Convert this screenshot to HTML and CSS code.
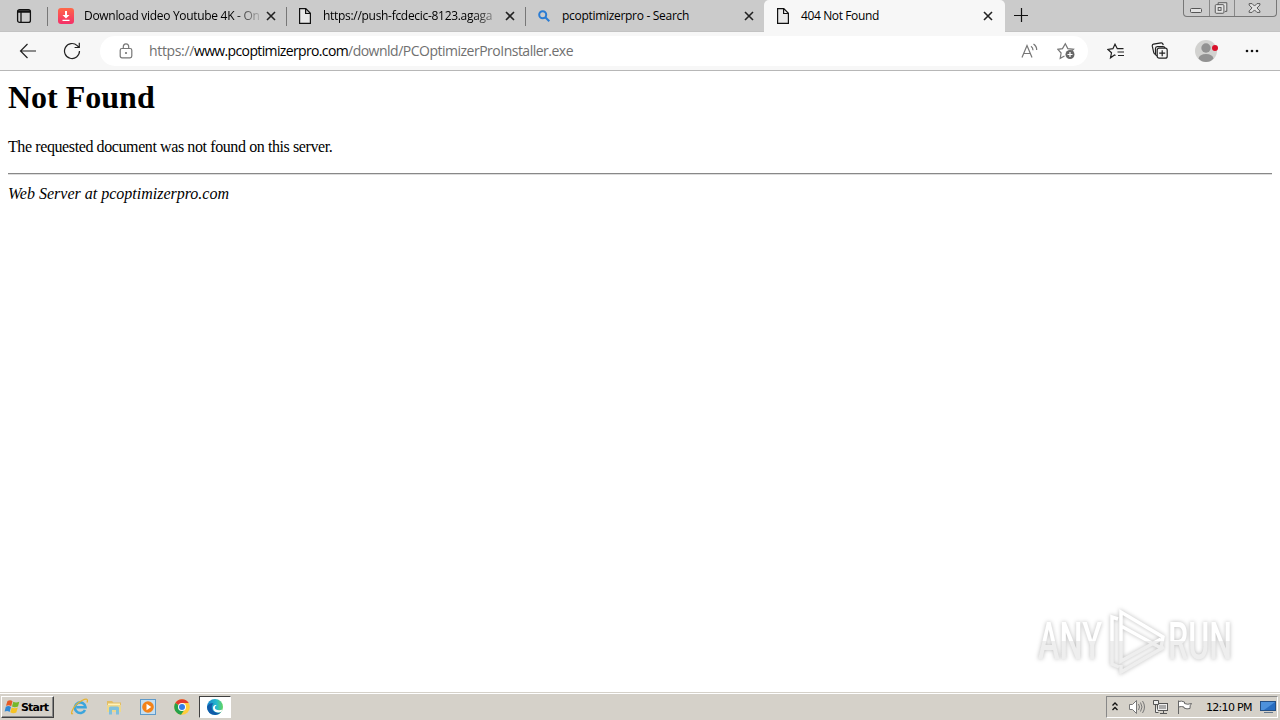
FILE: index.html
```html
<!DOCTYPE html>
<html lang="en">
<head>
    <meta charset="UTF-8">
    <title>404 Not Found</title>
    <link rel="stylesheet" href="styles.css">
</head>
<body>
    <div class="tabs">
        <div class="tab-actions">
            <svg width="16" height="16" viewBox="0 0 16 16" fill="none" stroke="#111" stroke-width="1.3"><rect x="1.6" y="1.6" width="12.8" height="12.8" rx="2"/><path d="M1.6 4h12.8M1.6 2.8h12.8M5 4v10" /></svg>
        </div>
        <div class="tab">
            <svg class="favicon" width="16" height="16" viewBox="0 0 16 16"><defs><linearGradient id="dl" x2="0" y2="1"><stop stop-color="#ff6848"/><stop offset="1" stop-color="#f42f69"/></linearGradient></defs><rect width="16" height="16" rx="3" fill="url(#dl)"/><path d="M7 3h2v4h2.500L8 10.500 4.500 7H7zM4.500 11.700h7V13h-7z" fill="#fff"/></svg>
            <span class="title fade">Download video Youtube 4K - On</span>
            <svg class="close" width="10" height="10" viewBox="0 0 10 10"><path d="M1 1l8 8M9 1L1 9"/></svg>
        </div>
        <div class="tab">
            <svg class="favicon" width="16" height="16" viewBox="0 0 16 16"><path class="page-icon" d="M2.600.700h6.200l4.600 4.600v10H2.600zM8.600.700v4.800h4.800"/></svg>
            <span class="title fade">https://push-fcdecic-8123.agaga</span>
            <svg class="close" width="10" height="10" viewBox="0 0 10 10"><path d="M1 1l8 8M9 1L1 9"/></svg>
        </div>
        <div class="tab no-line">
            <svg class="favicon" width="16" height="16" viewBox="0 0 16 16" fill="none" stroke="#2b7cd3" stroke-width="2"><circle cx="6.700" cy="6.700" r="3.500"/><path d="M9.300 9.300l4 4"/></svg>
            <span class="title">pcoptimizerpro - Search</span>
            <svg class="close" width="10" height="10" viewBox="0 0 10 10"><path d="M1 1l8 8M9 1L1 9"/></svg>
        </div>
        <div class="tab active">
            <svg class="favicon" width="16" height="16" viewBox="0 0 16 16"><path class="page-icon" d="M2.600.700h6.200l4.600 4.600v10H2.600zM8.600.700v4.800h4.800"/></svg>
            <span class="title">404 Not Found</span>
            <svg class="close" width="10" height="10" viewBox="0 0 10 10"><path d="M1 1l8 8M9 1L1 9"/></svg>
        </div>
        <svg class="new-tab" width="14" height="14" viewBox="0 0 14 14"><path d="M7.500 0v14M0 7.500h14" stroke="#111" stroke-width="1.200"/></svg>
        <div class="window-buttons">
            <svg width="25" height="16" viewBox="0 0 25 16"><rect x="6.500" y="8.500" width="11" height="4" rx="1"/></svg>
            <svg width="25" height="16" viewBox="0 0 25 16"><path d="M8.500 4.500v-2h9v9h-2"/><rect x="5.500" y="4.500" width="9" height="9" rx="1"/><rect x="8.500" y="7.500" width="3" height="3"/></svg>
            <svg width="42" height="16" viewBox="0 0 42 16"><path d="M14.500 3.500h3l2.500 2.500 2.500-2.500h3v1.500L22.500 8l3 3v1.500h-3L20 10l-2.500 2.500h-3V11l3-3-3-3z"/></svg>
        </div>
    </div>

    <div class="toolbar">
        <svg class="back" width="18" height="16" viewBox="0 0 18 16"><path d="M17 8H1.500M8.500 1l-7 7 7 7"/></svg>
        <svg class="reload" width="18" height="18" viewBox="0 0 18 18"><path d="M16.500 9a7.500 7.500 0 1 1-2.300-5.400l1.800 1.700M16.300.800v4.700h-4.700"/></svg>
        <div class="address">
            <svg class="lock" width="14" height="16" viewBox="0 0 14 16"><rect x="1.200" y="5.500" width="11.600" height="9.300" rx="1.700"/><path d="M4.300 5.500V3.800a2.700 2.900 0 0 1 5.400 0v1.700"/><circle cx="7" cy="10" r=".5"/></svg>
            <div class="url"><span class="scheme">https://</span><span class="host">www.pcoptimizerpro.com</span><span class="path">/downld/PCOptimizerProInstaller.exe</span></div>
            <svg class="read" width="17" height="16" viewBox="0 0 17 16"><path d="M1 14.500L6 2.500l5 12M2.700 10.500h6.600M10 3.300q2 1.400 2 4M12.500 1q3.300 2.300 3.200 6"/></svg>
            <svg class="fav-add" width="19" height="18" viewBox="0 0 19 18"><path d="M7.500 14l-4.300 2.300.9-5.300L.900 7.300l4.600-.7L8.300 1.800l2.500 4.800 5.700.7-1.800 1.700"/><circle cx="13" cy="12.500" r="4.500" fill="#666" stroke="none"/><path d="M13 10v5M10.500 12.500h5" stroke="#fff"/></svg>
        </div>
        <svg class="favorites" width="18" height="17" viewBox="0 0 18 17"><path d="M8.500 12.600L7.500 12 3.500 14.800l1-5L1 6.500l4.900-.8L8 1.200l2.300 4.500h6.200M10.500 9h6.500M11 12.500h6"/></svg>
        <svg class="collections" width="18" height="18" viewBox="0 0 18 18"><path d="M4.500 12.500Q3 12 2.700 10.500L1.300 4.200q-.3-1.600 1.200-2l7.500-1.400q1.500-.2 1.900 1.200l.3 1.200M6.200 14Q4.500 13.500 4.500 12V6.500q0-1.900 1.800-1.900h5.700q1.700 0 2 1.600"/><rect x="6.200" y="6.200" width="10" height="10" rx="2" fill="#f7f7f7"/><path d="M11.200 8.300v6M8.200 11.200h6"/></svg>
        <svg class="profile" width="24" height="24" viewBox="0 0 24 24"><circle cx="11" cy="12" r="11" fill="#d2d2d0"/><circle cx="11" cy="9" r="4.700" fill="#929292"/><path d="M3.500 19.500q1-4.500 7.500-4.500t7.500 4.500Q15.500 23 11 23t-7.500-3.500z" fill="#929292"/><circle cx="20" cy="9" r="3" fill="#d9112b"/></svg>
        <svg class="more" width="14" height="4" viewBox="0 0 14 4" fill="#111"><circle cx="2" cy="2" r="1.300"/><circle cx="7" cy="2" r="1.300"/><circle cx="12" cy="2" r="1.300"/></svg>
    </div>

    <div class="page">
        <h1>Not Found</h1>
        <p>The requested document was not found on this server.</p>
        <hr>
        <address>Web Server at pcoptimizerpro.com</address>
        <svg class="watermark" width="210" height="74" viewBox="0 0 210 74">
            <defs>
                <linearGradient id="wm" x1="0" y1="0" x2="0" y2="74" gradientUnits="userSpaceOnUse"><stop offset=".5" stop-color="#fff"/><stop offset=".5" stop-color="#eee"/></linearGradient>
            </defs>
            <g class="mark">
                <text x="8" y="55" textLength="64" lengthAdjust="spacingAndGlyphs">ANY</text>
                <text x="138" y="55" textLength="64" lengthAdjust="spacingAndGlyphs">RUN</text>
                <path d="M88 15l-6-2v47l7 3M91 61v7l43-25"/>
                <path d="M91 8v14l40 22 2-11zM91 20v37l40-22"/>
            </g>
        </svg>
    </div>

    <div class="taskbar">
        <div class="start">
            <svg width="17" height="16" viewBox="0 0 17 16"><path d="M3.500 2q3-1.800 5 .2L7.200 7.300q-2-1.800-5.200-.5z" fill="#e65b25"/><path d="M9.300 2.700q2.500 1.500 6 0L14 7.500q-3.500 1.500-6-.1z" fill="#76b82a"/><path d="M1.800 7.700q3-1.500 5.200.3l-1.400 5q-2-1.700-5-.4z" fill="#3088d5"/><path d="M7.700 8.500q2.800 1.500 6.100 0l-1.500 5q-3 1.500-6-.2z" fill="#f6c324"/></svg>
            <span>Start</span>
        </div>
        <div class="quick">
            <svg width="18" height="18" viewBox="0 0 18 18" fill="none"><path d="M14 12A5.300 5.300 0 1 1 14.500 9.200H5.500" stroke="#3ca5dc" stroke-width="2.600"/><path d="M2 15.500Q-.500 17 1.300 12.500 4 6 11 2.500q7-3.500 5 2" stroke="#e6b331" stroke-width="1.300"/></svg>
        </div>
        <div class="quick">
            <svg width="18" height="18" viewBox="0 0 18 18"><path d="M2 3h5l1.500 1.500H16V14H2z" fill="#e2bd65"/><path d="M3 5.500h12V13H3z" fill="#fff2b8"/><path d="M2 7h14v7H2z" fill="#eed88c"/><path d="M4 10q0-1.500 1.500-1.500h7Q14 8.500 14 10v6.500h-3V12H7v4.500H4z" fill="#7ec0dd"/></svg>
        </div>
        <div class="quick">
            <svg width="18" height="18" viewBox="0 0 18 18"><rect x="1.500" y="1.500" width="15" height="15" fill="#c5def0" stroke="#5e9aca"/><circle cx="9" cy="9" r="5.800" fill="#f38218"/><path d="M7.500 5.800v6.400L12.300 9z" fill="#fff"/></svg>
        </div>
        <div class="quick">
            <svg width="18" height="18" viewBox="0 0 18 18"><circle cx="9" cy="9" r="7.800" fill="#ffcd3c"/><path d="M9 9L2.250 5.100A7.800 7.800 0 0 1 15.800 5.100H9z" fill="#e33b2e"/><path d="M2.250 5.100A7.800 7.800 0 0 0 8 16.700L12 11z" fill="#26a14b"/><circle cx="9" cy="9" r="4" fill="#fff"/><circle cx="9" cy="9" r="3" fill="#347ee8"/></svg>
        </div>
        <div class="quick running">
            <svg width="18" height="18" viewBox="0 0 18 18"><defs><linearGradient id="edge"><stop stop-color="#1686cf"/><stop offset=".6" stop-color="#27b9cc"/><stop offset="1" stop-color="#64d65d"/></linearGradient></defs><circle cx="9" cy="9" r="8" fill="url(#edge)"/><path d="M1 9q2-4.500 6.500-3.500Q4.500 8 6.500 12q2.500 4 8.500 2.300Q12.500 17.300 9 17 1.500 16.500 1 9z" fill="#115ba8"/><path d="M9.500 8q-1.500 2 .5 3.500 3 1.500 6.500 0l-1.300 2.600Q10 15.500 7.700 12.500q-1.500-3 .3-5 2-1 2.500.5z" fill="#fff"/></svg>
        </div>
        <div class="tray">
            <svg class="chevron" width="8" height="12" viewBox="0 0 8 12" fill="none" stroke="#111" stroke-width="1.300"><path d="M1.500 4.500L4 2l2.500 2.500M1.500 9L4 6.500 6.500 9"/></svg>
            <svg class="volume" width="18" height="16" viewBox="0 0 18 16" fill="none" stroke="#777"><path d="M1.500 5.500h3l4-4v13l-4-4h-3z" fill="#fff"/><path d="M10.500 5q2 3 0 6M12.500 3.500q3 4.500 0 9M14.500 2q4 6 0 12"/></svg>
            <svg class="network" width="17" height="16" viewBox="0 0 17 16" fill="#eee" stroke="#555"><rect x="5.500" y="4.500" width="10" height="7"/><path d="M7 6h7v4H7z" fill="#aaa" stroke="none"/><path d="M1.500 1.500h5v4h-5zM3.500 5.500v8h3M8 14.500h7M11.500 12v2"/></svg>
            <svg class="flag" width="17" height="16" viewBox="0 0 17 16" fill="#fff" stroke="#666"><path d="M2.500 15V1.500M2.500 2.500q3-1 6 .5v1.500q3 1.500 7 0-2 2-1.500 5-3 1-6-.500V8q-2.500-1-5.500 0z"/></svg>
            <span class="clock">12:10 PM</span>
            <svg class="desktop" width="16" height="14" viewBox="0 0 16 14"><rect x=".5" y="1.500" width="15" height="9" fill="#286dc0" stroke="#244f84"/><path d="M1 2h14L4 10H1z" fill="#4d91db"/><path d="M4 12.500h9" stroke="#63758a"/></svg>
        </div>
    </div>
</body>
</html>
```

FILE: styles.css
```css
* {
    box-sizing: border-box;
}
body {
    margin: 0;
    width: 1280px;
    height: 720px;
    overflow: hidden;
    display: flex;
    flex-direction: column;
    background: #fff;
    font-family: "Open Sans", "Noto Sans", sans-serif;
}
svg {
    display: block;
    flex-shrink: 0;
}
.tabs {
    height: 32px;
    display: flex;
    background: #cbcbcb;
    border-bottom: 1px solid #c3c3c3;
}
.tab-actions {
    width: 48px;
    padding: 8px 0 0 16px;
    background: linear-gradient(#777, #777) right 7px / 1px 19px no-repeat;
}
.tab {
    width: 239px;
    height: 32px;
    padding: 0 10px;
    display: flex;
    align-items: center;
    background: linear-gradient(#777, #777) right 7px / 1px 19px no-repeat;
}
.no-line {
    background: none;
}
.active {
    width: 241px;
    margin-left: -1px;
    padding-left: 11px;
    background: #f7f7f7;
    border-radius: 5px 5px 0 0;
}
.favicon {
    margin-right: 10px;
}
.page-icon {
    fill: #e9e9e9;
    stroke: #111;
    stroke-width: 1.2;
}
.title {
    width: 176px;
    white-space: nowrap;
    font-size: 12px;
    line-height: 18px;
    letter-spacing: -0.3px;
    color: #000;
}
.active .title {
    letter-spacing: -0.38px;
}
.fade {
    -webkit-mask-image: linear-gradient(to right, #000 150px, transparent 180px);
    mask-image: linear-gradient(to right, #000 150px, transparent 180px);
}
.close {
    margin-left: 6px;
    stroke: #222;
    stroke-width: 1.6;
}
.new-tab {
    margin: 8px 0 0 9px;
}
.window-buttons {
    display: flex;
    width: 94px;
    height: 17px;
    margin-left: auto;
    margin-right: 3px;
    border: 1px solid #777;
    border-top: 0;
    border-radius: 0 0 4px 4px;
}
.window-buttons svg {
    fill: #e2e2e2;
    stroke: #555;
}
.window-buttons svg + svg {
    border-left: 1px solid #888;
}
.toolbar {
    height: 39px;
    display: flex;
    align-items: center;
    background: #f7f7f7;
    border-bottom: 1px solid #b7b7b7;
    fill: none;
    stroke: #222;
    stroke-width: 1.2;
}
.back {
    margin-left: 19px;
}
.reload {
    margin-left: 26px;
}
.address {
    width: 988px;
    height: 30px;
    margin-left: 19px;
    border-radius: 15px;
    padding-left: 19px;
    display: flex;
    align-items: center;
    background: #fff;
    stroke: #777;
}
.url {
    width: 887px;
    padding-left: 16px;
    display: flex;
    font-size: 14px;
    line-height: 20px;
    white-space: nowrap;
    color: #707070;
}
.scheme {
    letter-spacing: -0.35px;
}
.host {
    color: #000;
    letter-spacing: -0.64px;
}
.path {
    letter-spacing: -0.5px;
}
.read {
    margin-left: 1px;
}
.fav-add {
    margin-left: 19px;
}
.favorites {
    margin-left: 19px;
}
.collections {
    margin-left: 26px;
}
.profile {
    margin-left: 26px;
    stroke: none;
}
.more {
    margin-left: 26px;
    stroke: none;
}
.page {
    position: relative;
    height: 621px;
    padding: 0 8px;
    font-family: "Liberation Serif", serif;
    font-size: 16px;
    color: #000;
}
h1 {
    margin: 8px 0 0;
    font-size: 32px;
    line-height: 37px;
}
p {
    margin: 22px 0 17px;
    line-height: 18px;
    letter-spacing: -0.4px;
}
hr {
    margin: 0 0 10px;
    border: 0;
    height: 2px;
    border-top: 1px solid #888;
    border-bottom: 1px solid #ddd;
}
address {
    line-height: 18px;
}
.watermark {
    position: absolute;
    right: 40px;
    bottom: 14px;
    overflow: visible;
}
.mark {
    fill: url(#wm);
    filter: drop-shadow(0 0 2px #bbb);
}
.mark text {
    font-family: Roboto, sans-serif;
    font-size: 51px;
    font-weight: 500;
}
.mark path {
    fill: none;
    stroke: url(#wm);
    stroke-width: 3.5;
}
.taskbar {
    height: 28px;
    display: flex;
    align-items: center;
    padding: 1px 2px 0 1px;
    background: #d5d1c9;
    border-top: 1px solid #d5d1c9;
    box-shadow: inset 0 1px #fff;
    font-family: "DejaVu Sans", sans-serif;
    font-size: 11px;
}
.start {
    width: 53px;
    height: 22px;
    margin-right: 9px;
    padding-left: 2px;
    display: flex;
    align-items: center;
    border: 1px solid;
    border-color: #fff #404040 #404040 #fff;
    box-shadow: inset -1px -1px #888;
    font-family: "DejaVu Sans", sans-serif;
    font-size: 11px;
    font-weight: bold;
    letter-spacing: -0.8px;
}
.quick {
    width: 34px;
    height: 22px;
    display: flex;
    align-items: center;
    justify-content: center;
}
.running {
    width: 32px;
    background: #fff;
    border: 1px solid;
    border-color: #404040 #fff #fff #404040;
}
.tray {
    width: 172px;
    height: 22px;
    margin-left: auto;
    padding-left: 4px;
    display: flex;
    align-items: center;
    border: 1px solid;
    border-color: #888 #fff #fff #888;
}
.volume {
    margin-left: 9px;
}
.network {
    margin-left: 6px;
}
.flag {
    margin-left: 7px;
}
.clock {
    width: 47px;
    margin: 0 7px 0 13px;
    white-space: nowrap;
    letter-spacing: -0.7px;
}
```
